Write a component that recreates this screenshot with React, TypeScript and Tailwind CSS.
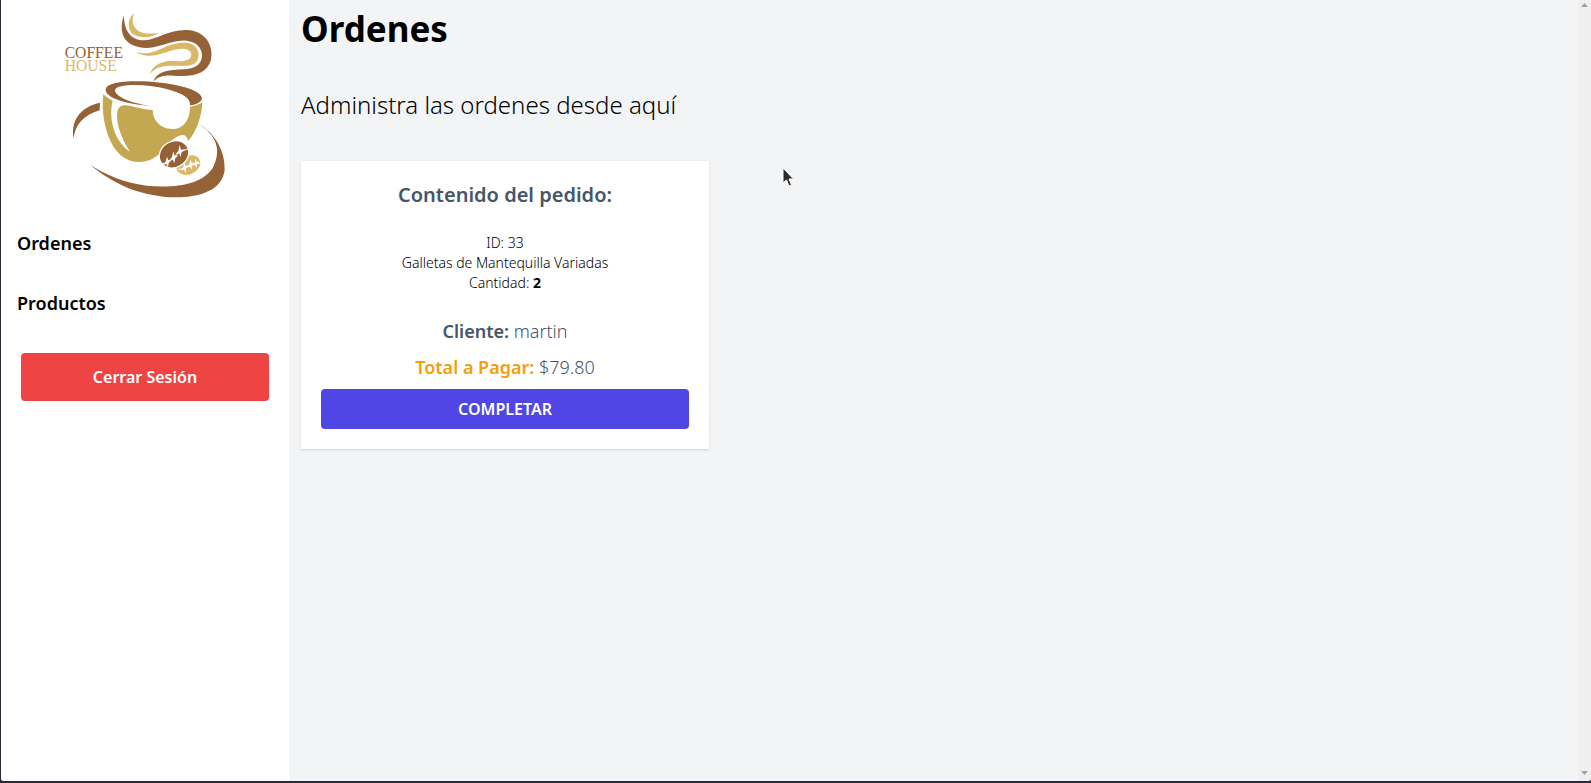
import React from 'react';

const order = {
  id: 33,
  items: [{ name: 'Galletas de Mantequilla Variadas', quantity: 2 }],
  client: 'martin',
  total: '$79.80',
};

function Logo() {
  return (
    <svg viewBox="0 0 570 600" className="h-[200px] w-[190px]" role="img" aria-label="Coffee House">
      <g fill="#956136">
        <path d="M222 47C214 65 212 90 222 112C235 138 275 148 310 142C345 135 375 120 410 122C440 125 458 145 456 170C452 195 435 206 400 208C360 210 322 212 310 245C325 228 345 226 370 227C430 232 470 222 483 180C492 135 465 92 410 90C360 88 320 118 285 121C245 122 222 95 222 47Z" />
        <text x="44" y="174" fontSize="47" fontFamily="Liberation Serif, serif">COFFEE</text>
      </g>
      <g fill="#dbb868">
        <path d="M252 40C235 53 232 80 243 97C260 116 300 117 327 98C300 102 280 103 264 92C248 80 244 60 252 40Z" />
        <path d="M258 157C285 163 305 160 330 148C365 130 400 123 425 132C450 145 452 175 435 190C415 203 385 196 350 198C325 200 308 210 301 223C303 205 320 190 350 184C375 180 405 190 420 175C430 160 420 147 400 146C365 145 330 170 290 167C275 165 265 162 258 157Z" />
        <text x="44" y="214" fontSize="47" fontFamily="Liberation Serif, serif">HOUSE</text>
      </g>
      <g transform="translate(0 210)">
        <g fill="#956136">
          <path d="M167 58C170 38 220 32 280 34C360 38 450 55 456 84C456 95 440 104 420 106C422 85 400 70 350 57C290 42 200 40 195 60C195 80 240 98 300 108C230 102 165 85 167 58Z" />
          <path d="M150 98C100 108 60 145 71 205C75 165 100 135 149 121Z" />
          <path d="M445 162C500 195 515 240 490 290C460 345 370 355 290 347C220 340 160 310 122 286C170 325 240 370 340 380C430 388 515 370 524 300C527 240 490 185 445 162Z" />
        </g>
        <path fill="#c4a751" d="M160 72C168 80 176 86 188 92C174 150 195 215 240 245C210 200 192 140 206 115C211 105 222 104 240 107C262 113 285 118 308 120C308 150 330 176 365 177C400 178 420 150 420 110C435 108 448 103 457 97C455 140 440 185 414 213C410 190 395 190 370 207C335 240 320 276 265 276C180 275 150 150 160 72Z" />
        <ellipse cx="415" cy="285" rx="37" ry="28" fill="#dbb868" transform="rotate(-22 415 285)" />
        <ellipse cx="372" cy="253" rx="48" ry="41" fill="#fff" transform="rotate(-32 372 253)" />
        <ellipse cx="372" cy="253" rx="44" ry="37" fill="#956136" transform="rotate(-32 372 253)" />
        <g fill="none" stroke="#fff" strokeWidth="3">
          <path d="M336 282Q350 280 366 266T390 246L415 236" />
          <path d="M384 298Q396 299 408 290T434 281L452 279" />
        </g>
        <g fill="#fff">
          <path d="M351 260L355 271L365 270L356 279L354 292L349 282L339 285L347 275Z" />
          <path d="M370 244L374 257L385 256L375 266L373 279L368 269L357 272L366 261Z" />
          <path d="M389 225L393 239L405 238L394 248L392 261L387 250L376 253L385 243Z" />
          <path d="M403 277L407 288L416 288L408 296L407 309L402 299L392 301L400 292Z" />
          <path d="M421 268L425 279L434 279L426 287L425 300L420 290L411 292L418 284Z" />
          <path d="M437 265L440 275L449 275L441 283L440 294L435 285L427 287L434 279Z" />
        </g>
      </g>
    </svg>
  );
}

function Sidebar() {
  return (
    <aside className="flex w-72 shrink-0 flex-col bg-white">
      <div className="flex justify-center">
        <Logo />
      </div>
      <nav className="mt-[29px] flex flex-col gap-8 px-4 text-[18px] leading-7 font-semibold">
        <a href="#ordenes">Ordenes</a>
        <a href="#productos">Productos</a>
      </nav>
      <button type="button" className="mx-5 mt-9 h-12 rounded bg-[#ef4444] text-[16px] font-semibold text-white">
        Cerrar Sesión
      </button>
    </aside>
  );
}

function OrderCard() {
  return (
    <article className="mt-10 w-[408px] bg-white p-5 text-center shadow">
      <h2 className="text-[20px] leading-7 font-semibold text-[#475569]">Contenido del pedido:</h2>
      <div className="py-6 text-[14px] leading-5 font-light">
        <p>ID: {order.id}</p>
        {order.items.map((item) => (
          <div key={item.name}>
            <p>{item.name}</p>
            <p>
              Cantidad: <b className="font-bold">{item.quantity}</b>
            </p>
          </div>
        ))}
      </div>
      <p className="text-[18px] leading-7 font-light text-[#475569]">
        <span className="font-semibold">Cliente:</span> {order.client}
      </p>
      <p className="mt-2 text-[18px] leading-7 font-light text-[#475569]">
        <span className="font-semibold text-[#f59e0b]">Total a Pagar:</span> {order.total}
      </p>
      <button type="button" className="mt-2 h-10 w-full rounded bg-[#4f46e5] text-[16px] font-semibold text-white uppercase">
        Completar
      </button>
    </article>
  );
}

export default function App() {
  return (
    <div className="flex min-h-screen bg-[#2a2b38] pb-[2px] pl-px font-['Noto_Sans',sans-serif] text-black">
      <div className="flex grow overflow-hidden rounded-b-[3px] bg-gray-100">
        <Sidebar />
        <main className="grow px-3 pt-[9px]">
          <h1 className="text-[35px] leading-10 font-bold">Ordenes</h1>
          <p className="mt-10 text-[24px] leading-8 font-light">Administra las ordenes desde aquí</p>
          <OrderCard />
        </main>
        <div className="flex w-[13px] flex-col items-center justify-between bg-[#efefef] py-[3px]" aria-hidden="true">
          <svg className="h-1 w-[7px]" viewBox="0 0 7 4"><path d="M0 4L3.5 0L7 4Z" fill="#a0a0a0" /></svg>
          <svg className="mb-[3px] h-1 w-[7px]" viewBox="0 0 7 4"><path d="M0 0L3.5 4L7 0Z" fill="#a0a0a0" /></svg>
        </div>
      </div>
      <svg className="pointer-events-none absolute top-[167px] left-[782px] h-5 w-3" viewBox="0 0 12 20" aria-hidden="true">
        <path d="M1 1V16L4.500 13L7 19L9.500 18L7 12H11.500Z" fill="#2b2b2b" stroke="#fff" strokeWidth="1" />
      </svg>
    </div>
  );
}
